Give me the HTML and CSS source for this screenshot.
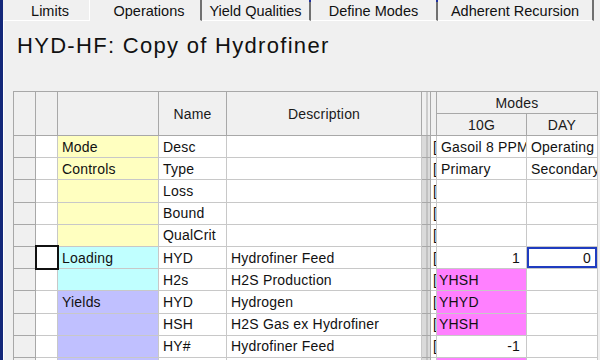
FILE: index.html
```html
<!DOCTYPE html>
<html lang="en">
<head>
    <meta charset="UTF-8">
    <title>HYD-HF: Copy of Hydrofiner</title>
    <link rel="stylesheet" href="styles.css">
</head>
<body>
    <div class="window">
        <!-- Tab strip -->
        <div class="tabs">
            <div class="tab tab-limits">Limits</div>
            <div class="tab tab-ops active">Operations</div>
            <div class="tab tab-yq">Yield Qualities</div>
            <div class="tab tab-dm">Define Modes</div>
            <div class="tab tab-ar">Adherent Recursion</div>
        </div>

        <div class="panel">
            <h1 class="title">HYD-HF: Copy of Hydrofiner</h1>

            <table class="grid">
                <colgroup>
                    <col class="w-rowhead">
                    <col class="w-mark">
                    <col class="w-cat">
                    <col class="w-name">
                    <col class="w-desc">
                    <col class="w-sep">
                    <col class="w-brk">
                    <col class="w-10g">
                    <col class="w-day">
                </colgroup>
                <thead>
                    <tr class="head-top">
                        <th rowspan="2"></th>
                        <th rowspan="2"></th>
                        <th rowspan="2"></th>
                        <th rowspan="2">Name</th>
                        <th rowspan="2">Description</th>
                        <th rowspan="2" class="sep"></th>
                        <th rowspan="2"></th>
                        <th colspan="2">Modes</th>
                    </tr>
                    <tr class="head-sub">
                        <th>10G</th>
                        <th>DAY</th>
                    </tr>
                </thead>
                <tbody id="grid-body">
                    <!-- rows are built from the data below -->
                </tbody>
            </table>
        </div>
    </div>

    <script>
        const rows = [
            { cat: "Mode", tone: "yellow", name: "Desc", desc: "", g10: "Gasoil 8 PPM", day: "Operating" },
            { cat: "Controls", tone: "yellow", name: "Type", desc: "", g10: "Primary", day: "Secondary" },
            { cat: "", tone: "yellow", name: "Loss", desc: "", g10: "", day: "" },
            { cat: "", tone: "yellow", name: "Bound", desc: "", g10: "", day: "" },
            { cat: "", tone: "yellow", name: "QualCrit", desc: "", g10: "", day: "" },
            { cat: "Loading", tone: "cyan", name: "HYD", desc: "Hydrofiner Feed", g10: "1", day: "0", num: true, focus: true },
            { cat: "", tone: "cyan", name: "H2s", desc: "H2S Production", g10: "YHSH", day: "", pink: true },
            { cat: "Yields", tone: "lilac", name: "HYD", desc: "Hydrogen", g10: "YHYD", day: "", pink: true },
            { cat: "", tone: "lilac", name: "HSH", desc: "H2S Gas ex Hydrofiner", g10: "YHSH", day: "", pink: true },
            { cat: "", tone: "lilac", name: "HY#", desc: "Hydrofiner Feed", g10: "-1", day: "", num: true },
            { cat: "", tone: "lilac", name: "", desc: "", g10: "", day: "", pink: true }
        ];

        const body = document.getElementById("grid-body");

        rows.forEach(row => {
            const tr = document.createElement("tr");
            const numClass = row.num ? " num" : "";
            tr.innerHTML = `
                <td class="rowhead"></td>
                <td class="mark${row.focus ? " focus" : ""}"></td>
                <td class="cat ${row.tone}">${row.cat}</td>
                <td>${row.name}</td>
                <td>${row.desc}</td>
                <td class="sep"></td>
                <td class="brk">[</td>
                <td class="${row.pink ? "pink" : ""}${numClass}">${row.g10}</td>
                <td class="${numClass}${row.focus ? " current" : ""}">${row.day}</td>
            `;
            body.appendChild(tr);
        });
    </script>
</body>
</html>
```

FILE: styles.css
```css
/* Reset */
* {
    box-sizing: border-box;
    margin: 0;
    padding: 0;
}

body {
    width: 600px;
    height: 360px;
    overflow: hidden;
    background-color: #f0f0f0;
    font-family: 'Liberation Sans', Arial, sans-serif;
    color: #111;
}

/* Window frame */
.window {
    height: 360px;
    border-left: 3px solid #14287a;
    background-color: #f0f0f0;
}

/* Tab strip */
.tabs {
    display: flex;
    height: 21px;
    font-size: 14.5px;
}

.tab {
    position: relative;
    height: 21px;
    padding-top: 2px;
    line-height: 18px;
    text-align: center;
    border-bottom: 1px solid #ffffff;
    border-right: 2px solid #707070;
    white-space: nowrap;
}

.tab::before {
    content: "";
    position: absolute;
    left: -2px;
    top: 0;
    width: 2px;
    height: 2px;
    background-color: #2030a0;
}

.tab-limits {
    width: 87px;
    padding-left: 8px;
    border-right: 1px solid #ffffff;
}

.tab-limits::before,
.tab-ops::before,
.tab-yq::before {
    display: none;
}

.tab-ops {
    width: 112px;
    padding-left: 8px;
}

.tab-yq { width: 109px; }
.tab-dm { width: 127px; }
.tab-ar { width: 156px; }

.tab.active {
    border-bottom-color: transparent;
}

/* Panel */
.panel {
    border-left: 1px solid #ffffff;
    padding: 11px 0 0 9px;
}

.title {
    font-size: 22px;
    font-weight: normal;
    letter-spacing: 1.3px;
    line-height: 28px;
    padding-left: 4px;
    margin-bottom: 31px;
    color: #111;
}

/* Grid */
.grid {
    table-layout: fixed;
    border-collapse: collapse;
    width: 584px;
    font-size: 14px;
    letter-spacing: 0.2px;
    border-left: 1px solid #808080;
    border-top: 1px solid #909090;
}

.w-rowhead { width: 22px; }
.w-mark { width: 22px; }
.w-cat { width: 101px; }
.w-name { width: 68px; }
.w-desc { width: 195px; }
.w-sep { width: 9px; }
.w-brk { width: 6px; }
.w-10g { width: 90px; }
.w-day { width: 71px; }

.grid th {
    background-color: #f0f0f0;
    border: 1px solid #a8a8a8;
    font-weight: normal;
    text-align: center;
    height: 22px;
    color: #1a1a1a;
}

.grid td {
    background-color: #ffffff;
    border: 1px solid #c8c8c8;
    height: 22.2px;
    padding: 0 3px 0 4px;
    white-space: nowrap;
    overflow: hidden;
    vertical-align: middle;
}

.grid td.rowhead {
    background-color: #f0f0f0;
    border-color: #a8a8a8;
}

.grid td.mark {
    border-left-color: #909090;
}

.grid .sep,
.grid td.sep {
    padding: 0;
    border-color: #a8a8a8;
    background: linear-gradient(to right, #dadada 0 4px, #a8a8a8 4px 5px, #dadada 5px);
}

.grid th.sep {
    background: linear-gradient(to right, #f0f0f0 0 4px, #a8a8a8 4px 5px, #f0f0f0 5px);
}

.grid td.brk {
    padding: 0 0 0 2px;
    text-overflow: clip;
}

.grid td.cat.yellow { background-color: #ffffc0; }
.grid td.cat.cyan { background-color: #c0ffff; }
.grid td.cat.lilac { background-color: #c0c0ff; }
.grid td.pink { background-color: #ff80ff; padding-left: 2px; }

.grid td.num {
    text-align: right;
    padding-right: 6px;
}

/* Focus and selection marks */
.grid td.focus {
    outline: 2px solid #111;
    outline-offset: -1px;
}

.grid td.current {
    box-shadow: inset 0 0 0 2px #1f3cc0;
}
```
